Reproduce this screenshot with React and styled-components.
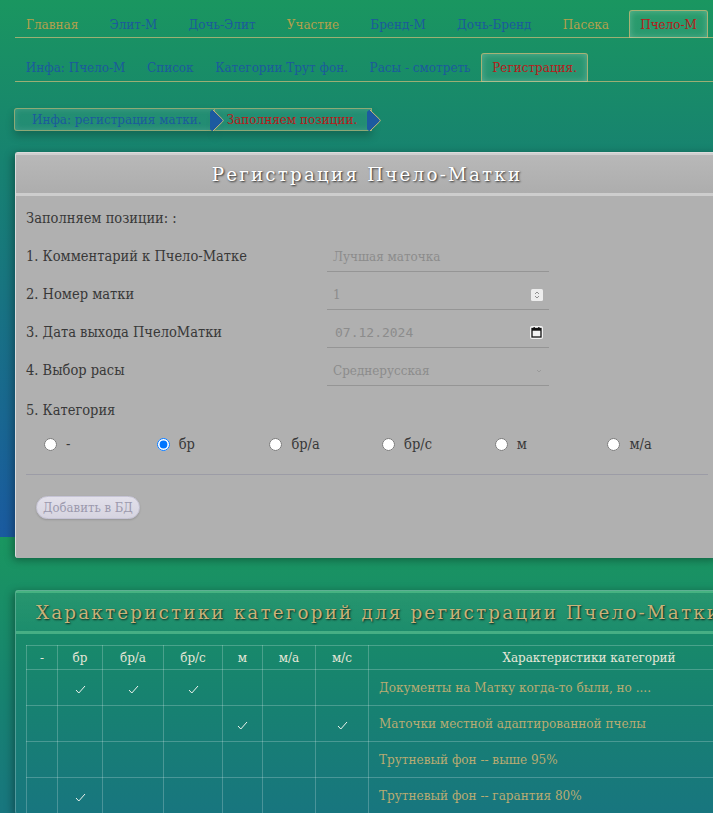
import React from "react";
import styled, { createGlobalStyle } from "styled-components";

const Global = createGlobalStyle`
  html, body { margin: 0; padding: 0; }
  body {
    overflow-x: hidden;
    font-family: "DejaVu Serif", serif;
    background: linear-gradient(180deg, #1a9660 0%, #178270 30%, #1a5aa0 100%);
    background-size: 100% 537px;
    background-repeat: repeat-y;
    min-height: 813px;
  }
`;

const cond = `
  font-family: "DejaVu Serif Condensed", "DejaVu Serif", serif;
  font-stretch: condensed;
`;

const Page = styled.div`
  padding: 10px 0 0 15px;
  width: 820px;
`;

const Tabs = styled.ul`
  list-style: none;
  margin: ${(p) => (p.$second ? "15px 0 0" : "0")};
  padding: 0;
  display: flex;
  gap: ${(p) => (p.$second ? "0" : "9.3px")};
  border-bottom: 1px solid rgba(200, 185, 120, 0.75);
  width: 760px;
`;

const Tab = styled.li`
  font-size: 12px;
  padding: 0 ${(p) => (p.$second ? "9.8px" : "10px")};
  height: ${(p) => (p.$second ? "28px" : "27px")};
  display: flex;
  align-items: center;
  margin-bottom: -1px;
  border: 1px solid transparent;
  border-bottom: none;
  border-radius: 3px 3px 0 0;
  white-space: nowrap;
  color: ${(p) => (p.$active ? "#b81a1a" : p.$khaki ? "#b4a04c" : "#1c5a9c")};
  ${(p) =>
    p.$active &&
    `
    border-color: rgba(200, 185, 120, 0.8);
    background: rgba(255,255,255,0.07);
    box-shadow: inset 0 0 7px rgba(255,255,255,0.25);
  `}
`;

const Crumbs = styled.div`
  display: flex;
  margin: 26px 0 0 -1px;
`;

const Crumb = styled.div`
  position: relative;
  height: 21px;
  display: flex;
  align-items: center;
  padding: 0 ${(p) => (p.$first ? "12px" : "14px")} 0 ${(p) => (p.$first ? "17px" : "12px")};
  font-size: 12px;
  color: ${(p) => (p.$active ? "#b81a1a" : "#1c5a9c")};
  border: 1px solid rgba(200, 185, 120, 0.65);
  border-radius: ${(p) => (p.$first ? "3px 0 0 3px" : "0")};
  border-left: ${(p) => (p.$first ? "" : "none")};
  background: rgba(255, 255, 255, 0.05);
  box-shadow: 0 5px 8px rgba(0, 0, 0, 0.22), inset 0 0 6px rgba(255,255,255,0.15);
`;

const Arrow = styled.svg`
  position: absolute;
  right: -11px;
  top: 0px;
  z-index: 2;
`;

const Card = styled.section`
  margin-top: ${(p) => p.$mt};
  width: ${(p) => p.$w};
  background: ${(p) => (p.$grey ? "#b0b0b0" : "transparent")};
  border-left: 1px solid ${(p) => (p.$grey ? "#dcdcdc" : "rgba(255,255,255,0.25)")};
  border-top: 1px solid ${(p) => (p.$grey ? "#dcdcdc" : "rgba(255,255,255,0.3)")};
  border-radius: 3px 0 0 3px;
  box-shadow: -2px 2px 8px rgba(0, 0, 0, 0.35);
  padding-bottom: ${(p) => p.$pb || "0"};
`;

const CardHead = styled.h2`
  margin: 0;
  height: 38px;
  display: flex;
  align-items: center;
  justify-content: ${(p) => (p.$grey ? "center" : "flex-start")};
  padding-left: ${(p) => (p.$grey ? "0" : "20px")};
  font-family: "DejaVu Serif", serif;
  font-weight: normal;
  font-size: 18.3px;
  letter-spacing: 2.2px;
  white-space: nowrap;
  color: ${(p) => (p.$grey ? "#ffffff" : "#c9b27a")};
  text-shadow: 1px 1px 2px rgba(0, 0, 0, 0.75);
  border-top: 2px solid ${(p) => (p.$grey ? "#cfcfcf" : "rgba(120,220,160,0.45)")};
  border-bottom: 3px solid ${(p) => (p.$grey ? "#cdcdcd" : "rgba(120,220,160,0.4)")};
  background: ${(p) =>
    p.$grey
      ? "linear-gradient(#b8b8b8, #adadad)"
      : "linear-gradient(rgba(255,255,255,0.06), rgba(255,255,255,0.02))"};
`;

const Body = styled.div`
  padding: 0 10px;
  ${cond}
  color: #383838;
  font-size: 14.5px;
`;

const Lead = styled.div`
  height: 38px;
  margin-top: 3px;
  display: flex;
  align-items: center;
`;

const Row = styled.div`
  display: grid;
  grid-template-columns: 301px 222px;
  height: 38px;
  align-items: center;
`;

const Field = styled.div`
  height: 29px;
  margin-top: 2px;
  border-bottom: 1px solid #959595;
  display: flex;
  align-items: center;
  justify-content: space-between;
  padding: 0 6px;
  ${(p) => (p.$mono ? 'font-family: "DejaVu Sans Mono", monospace; font-stretch: normal;' : cond)}
  font-size: ${(p) => (p.$mono ? "13px" : "13.3px")};
  color: #8c8c8c;
  padding-left: ${(p) => (p.$mono ? "8px" : "6px")};
`;

const CatLabel = styled.div`
  height: 42px;
  display: flex;
  align-items: center;
`;

const Radios = styled.div`
  display: grid;
  grid-template-columns: repeat(6, 112.7px);
  height: 26px;
  align-items: center;
  margin-bottom: 18px;
  border-bottom: 1px solid #9c9ca6;
  box-sizing: content-box;
  padding-bottom: 17px;
`;

const RadioItem = styled.label`
  display: flex;
  align-items: center;
  gap: 9px;
  padding-left: 18px;
  color: #383838;
  input {
    margin: 0;
    width: 13px;
    height: 13px;
  }
`;

const AddButton = styled.button`
  margin: 3px 0 0 10px;
  height: 23px;
  padding: 0 6px;
  border-radius: 12px;
  border: 1px solid #c6c4d6;
  background: linear-gradient(#e2e0ea, #d6d4e0);
  color: #9b99ad;
  ${cond}
  font-size: 13px;
  box-shadow: 0 1px 2px rgba(0,0,0,0.15);
`;

const TableWrap = styled.div`
  padding: 11px 10px 0;
`;

const Table = styled.table`
  border-collapse: collapse;
  table-layout: fixed;
  width: 784px;
  ${cond}
  font-size: 13.4px;
  th, td {
    border: 1px solid rgba(255, 255, 255, 0.22);
    text-align: center;
    padding: 0;
  }
  th {
    height: 23px;
    color: #e6e6d8;
    font-weight: normal;
    font-size: 13.3px;
  }
  td {
    height: 35px;
  }
`;

const Desc = styled.td`
  && {
    text-align: left;
    padding-left: 10px;
    color: #b9ab72;
  }
`;

const Check = styled.svg`
  display: block;
  margin: 3px auto 0;
`;

const ArrowIcon = () => (
  <Arrow width="16" height="23" viewBox="0 0 16 23">
    <path d="M4 1 Q2 1 1 3 L1 20 Q2 22 4 22 L13.5 12.8 Q15 11.5 13.5 10.2 Z" fill="#1c5aa0" />
    <path d="M4 1 L13.5 10.2 Q15 11.5 13.5 12.8 L4 22" fill="none" stroke="#c8b878" strokeWidth="1" />
  </Arrow>
);

const CheckIcon = () => (
  <Check width="11" height="9" viewBox="0 0 11 9">
    <path d="M1 5 L3.8 8 L10 1" fill="none" stroke="#eef4ee" strokeWidth="1" />
  </Check>
);

const Spinner = () => (
  <svg width="12" height="12" viewBox="0 0 12 12">
    <rect x="0" y="0" width="12" height="12" rx="1.5" fill="#ededed" />
    <path d="M4 5 L6 3 L8 5 M4 7 L6 9 L8 7" fill="none" stroke="#777" strokeWidth="0.8" />
  </svg>
);

const Calendar = () => (
  <svg width="13" height="13" viewBox="0 0 13 13">
    <rect x="0" y="0" width="13" height="13" rx="2" fill="#f2f2f2" />
    <rect x="2" y="2.5" width="9" height="8.5" fill="none" stroke="#111" strokeWidth="1.3" />
    <rect x="2" y="2.5" width="9" height="2.2" fill="#111" />
    <rect x="3.5" y="1" width="1.3" height="2" fill="#111" />
    <rect x="8.2" y="1" width="1.3" height="2" fill="#111" />
  </svg>
);

const Chevron = () => (
  <svg width="8" height="6" viewBox="0 0 8 6">
    <path d="M2 2 L4 4 L6 2" fill="none" stroke="#999" strokeWidth="0.9" />
  </svg>
);

const cats = ["-", "бр", "бр/а", "бр/с", "м", "м/а"];
const cols = [
  { t: "-", w: 31 },
  { t: "бр", w: 45 },
  { t: "бр/а", w: 61 },
  { t: "бр/с", w: 59 },
  { t: "м", w: 40 },
  { t: "м/а", w: 53 },
  { t: "м/с", w: 53 },
];
const rows = [
  { c: [1, 2, 3], d: "Документы на Матку когда-то были, но ...." },
  { c: [4, 6], d: "Маточки местной адаптированной пчелы" },
  { c: [], d: "Трутневый фон -- выше 95%" },
  { c: [1], d: "Трутневый фон -- гарантия 80%" },
];

export default function App() {
  return (
    <>
      <Global />
      <Page>
        <Tabs>
          <Tab $khaki>Главная</Tab>
          <Tab>Элит-М</Tab>
          <Tab>Дочь-Элит</Tab>
          <Tab $khaki>Участие</Tab>
          <Tab>Бренд-М</Tab>
          <Tab>Дочь-Бренд</Tab>
          <Tab $khaki>Пасека</Tab>
          <Tab $active>Пчело-М</Tab>
        </Tabs>
        <Tabs $second>
          <Tab $second>Инфа: Пчело-М</Tab>
          <Tab $second>Список</Tab>
          <Tab $second>Категории.Трут фон.</Tab>
          <Tab $second>Расы - смотреть</Tab>
          <Tab $second $active>Регистрация.</Tab>
        </Tabs>
        <Crumbs>
          <Crumb $first>
            Инфа: регистрация матки.
            <ArrowIcon />
          </Crumb>
          <Crumb $active>
            Заполняем позиции.
            <ArrowIcon />
          </Crumb>
        </Crumbs>
        <Card $grey $mt="21px" $w="702px" $pb="39px">
          <CardHead $grey>Регистрация Пчело-Матки</CardHead>
          <Body>
            <Lead>Заполняем позиции: :</Lead>
            <Row>
              <span>1. Комментарий к Пчело-Матке</span>
              <Field>Лучшая маточка</Field>
            </Row>
            <Row>
              <span>2. Номер матки</span>
              <Field>
                1
                <Spinner />
              </Field>
            </Row>
            <Row>
              <span>3. Дата выхода ПчелоМатки</span>
              <Field $mono>
                07.12.2024
                <Calendar />
              </Field>
            </Row>
            <Row>
              <span>4. Выбор расы</span>
              <Field>
                Среднерусская
                <Chevron />
              </Field>
            </Row>
            <CatLabel>5. Категория</CatLabel>
            <Radios>
              {cats.map((c) => (
                <RadioItem key={c}>
                  <input type="radio" name="cat" defaultChecked={c === "бр"} />
                  {c}
                </RadioItem>
              ))}
            </Radios>
            <AddButton>Добавить в БД</AddButton>
          </Body>
        </Card>
        <Card $mt="32px" $w="805px">
          <CardHead>Характеристики категорий для регистрации Пчело-Матки</CardHead>
          <TableWrap>
            <Table>
              <colgroup>
                {cols.map((c) => (
                  <col key={c.t} style={{ width: c.w }} />
                ))}
                <col />
              </colgroup>
              <thead>
                <tr>
                  {cols.map((c) => (
                    <th key={c.t}>{c.t}</th>
                  ))}
                  <th>Характеристики категорий</th>
                </tr>
              </thead>
              <tbody>
                {rows.map((r) => (
                  <tr key={r.d}>
                    {cols.map((c, i) => (
                      <td key={c.t}>{r.c.includes(i) ? <CheckIcon /> : null}</td>
                    ))}
                    <Desc>{r.d}</Desc>
                  </tr>
                ))}
              </tbody>
            </Table>
          </TableWrap>
        </Card>
      </Page>
    </>
  );
}
